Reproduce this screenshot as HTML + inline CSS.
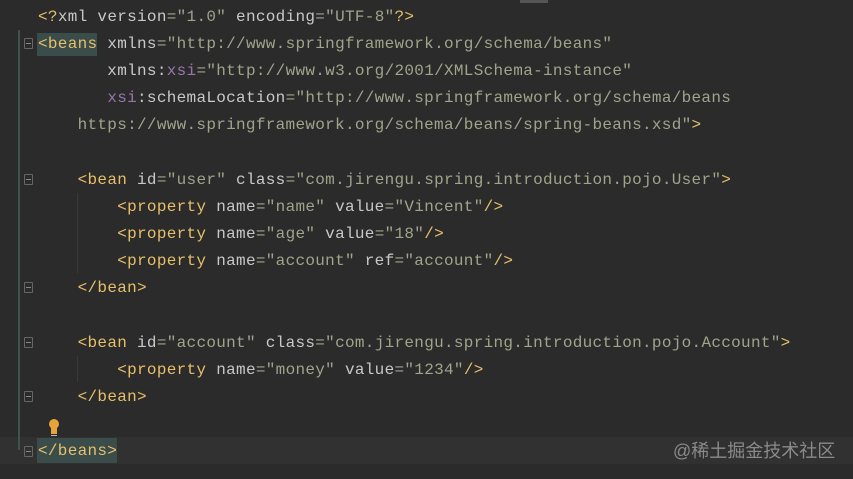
<!DOCTYPE html>
<html><head><style>
body{margin:0;width:853px;height:479px;background:#2b2b2b;overflow:hidden;position:relative;font-family:"Liberation Mono","DejaVu Sans Mono",monospace}
.ln{position:absolute;left:38px;height:27px;line-height:27px;font-size:16px;letter-spacing:0.3px;white-space:pre;color:#c8c8c8}
.t{color:#e8bf6a}.v{color:#a1a38a}.p{color:#9876aa}.a{color:#d0d0d0}
.gut{position:absolute;left:18px;top:30px;width:2px;height:420px;background:#42524f}
.fold{position:absolute;left:24px;width:9px;height:11px;border:1px solid #666;box-sizing:border-box;border-radius:1px}
.fold:after{content:"";position:absolute;left:1px;top:4px;width:5px;height:1px;background:#888}
.ig{position:absolute;width:1px;background:#3a3a3a}
</style></head><body>
<div style="position:absolute;left:0;top:437px;width:853px;height:27px;background:#313131"></div>
<div style="position:absolute;left:37px;top:33px;width:60px;height:23px;background:#3a4d4a"></div>
<div style="position:absolute;left:37px;top:438px;width:80px;height:25px;background:#3a4d4a"></div>
<div style="position:absolute;left:520px;top:0;width:28px;height:3px;background:#555"></div>
<div class="gut"></div>
<div class="ig" style="left:77px;top:193px;height:80px"></div>
<div class="ig" style="left:77px;top:356px;height:26px"></div>
<div class="fold" style="top:38px"></div>
<div class="fold" style="top:174px"></div>
<div class="fold" style="top:282px"></div>
<div class="fold" style="top:337px"></div>
<div class="fold" style="top:391px"></div>
<div class="fold" style="top:446px"></div>
<div style="position:absolute;left:49px;top:419px;width:10px;height:10px;border-radius:50%;background:#e8a33d"></div>
<div style="position:absolute;left:51px;top:428px;width:6px;height:6px;background:#e8a33d"></div>
<div style="position:absolute;left:51px;top:435px;width:6px;height:1px;background:#bbb"></div>

<div class="ln" style="top:4px"><span class="t">&lt;?</span>xml version<span class="v">="1.0"</span> encoding<span class="v">="UTF-8"</span><span class="t">?&gt;</span></div>
<div class="ln" style="top:31px"><span class="t">&lt;beans</span> xmlns<span class="v">="http://www.springframework.org/schema/beans"</span></div>
<div class="ln" style="top:58px">       xmlns:<span class="p">xsi</span><span class="v">="http://www.w3.org/2001/XMLSchema-instance"</span></div>
<div class="ln" style="top:85px">       <span class="p">xsi</span>:schemaLocation<span class="v">="http://www.springframework.org/schema/beans</span></div>
<div class="ln" style="top:112px"><span class="v">    https://www.springframework.org/schema/beans/spring-beans.xsd"</span><span class="t">&gt;</span></div>
<div class="ln" style="top:167px">    <span class="t">&lt;bean</span> id<span class="v">="user"</span> class<span class="v">="com.jirengu.spring.introduction.pojo.User"</span><span class="t">&gt;</span></div>
<div class="ln" style="top:194px">        <span class="t">&lt;property</span> name<span class="v">="name"</span> value<span class="v">="Vincent"</span><span class="t">/&gt;</span></div>
<div class="ln" style="top:221px">        <span class="t">&lt;property</span> name<span class="v">="age"</span> value<span class="v">="18"</span><span class="t">/&gt;</span></div>
<div class="ln" style="top:248px">        <span class="t">&lt;property</span> name<span class="v">="account"</span> ref<span class="v">="account"</span><span class="t">/&gt;</span></div>
<div class="ln" style="top:275px">    <span class="t">&lt;/bean&gt;</span></div>
<div class="ln" style="top:330px">    <span class="t">&lt;bean</span> id<span class="v">="account"</span> class<span class="v">="com.jirengu.spring.introduction.pojo.Account"</span><span class="t">&gt;</span></div>
<div class="ln" style="top:357px">        <span class="t">&lt;property</span> name<span class="v">="money"</span> value<span class="v">="1234"</span><span class="t">/&gt;</span></div>
<div class="ln" style="top:384px">    <span class="t">&lt;/bean&gt;</span></div>
<div class="ln" style="top:438px"><span class="t">&lt;/beans&gt;</span></div>
<div style="position:absolute;left:673px;top:438px;font-family:'Liberation Sans','Noto Sans CJK SC',sans-serif;font-size:18px;color:#8a8a8a;line-height:26px">@稀土掘金技术社区</div>
</body></html>
